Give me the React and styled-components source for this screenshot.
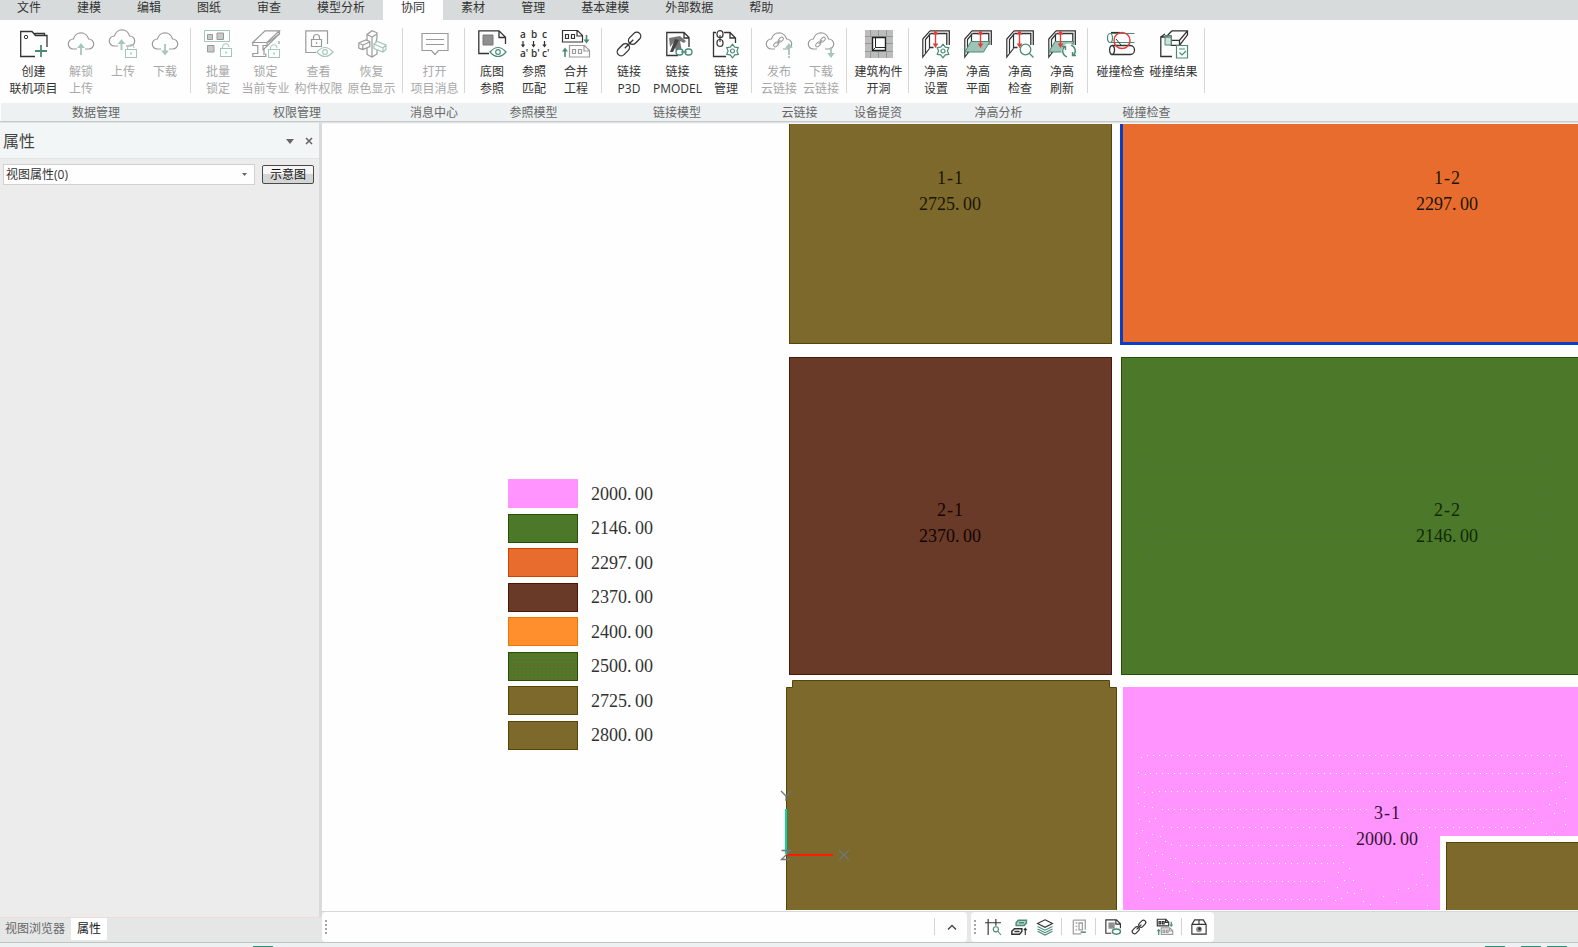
import React from "react";
import styled, { createGlobalStyle, css } from "styled-components";

const GlobalStyle = createGlobalStyle`
  *, *::before, *::after { box-sizing: border-box; }
  body {
    margin: 0;
    font-family: "Open Sans", "Noto Sans CJK SC", sans-serif;
    font-size: 12px;
    line-height: 16px;
    color: #333;
    background: #edf1f2;
  }
  button, select { font: inherit; color: inherit; }
`;

const color = {
  olive: ["#7d692c", "#584504"],
  brown: ["#693a28", "#4a1804"],
  green: ["#4c782a", "#225202"],
  orange: ["#e96c2f", "#cc4400"],
  amber: ["#ff8f2d", "#ee7700"],
  pink: ["#ff94ff", "#ff94ff"],
};

/* ---------- shell ---------- */

const Shell = styled.div`
  display: flex;
  flex-direction: column;
  min-height: 100vh;
`;

const MenuTabs = styled.nav`
  display: flex;
  height: 20px;
  background: #d8dbdc;
  overflow: hidden;
`;

const MenuTab = styled.button`
  border: 0;
  padding: 0 18px 5px;
  line-height: 15px;
  white-space: nowrap;
  background: ${(p) => (p.$active ? "#fefefe" : "transparent")};
  &:first-child { padding-left: 17px; }
`;

const Ribbon = styled.header`
  display: flex;
  background: #fefefe;
  border-bottom: 1px solid #c6cacb;
`;

const Group = styled.section`
  display: flex;
  flex-direction: column;
  flex: none;
  &:first-child { padding-left: 1px; }
`;

const GroupTools = styled.div`
  display: flex;
  height: 65px;
  margin: 8px 0 10px;
  padding: ${(p) => (p.$solo ? "0 3px 0 5px" : "0 4px 0 6px")};
  border-right: 1px solid #d6d6d6;
`;

const GroupLabel = styled.h2`
  margin: 0;
  height: 18px;
  font-size: 12px;
  line-height: 19px;
  font-weight: 400;
  text-align: center;
  color: #666;
  background: #edf1f2;
`;

const RibbonFiller = styled.div`
  flex: 1;
  align-self: flex-end;
  height: 18px;
  background: #edf1f2;
`;

const toolWidth = { normal: 42, wide: 53, latin: 55 };

const ToolButton = styled.button`
  --ink: #333;
  --accent: #4a8b78;
  --fill: #9b9b9b;
  display: flex;
  flex-direction: column;
  align-items: center;
  width: ${(p) => toolWidth[p.$size || "normal"]}px;
  border: 0;
  padding: 2px 0 0;
  background: none;
  line-height: 17px;
  white-space: nowrap;
  color: #333;
  svg { margin-bottom: 5px; flex: none; }
  &:disabled {
    --ink: #9a9a9a;
    --accent: #a5c6bc;
    --fill: #c8c8c8;
    color: #a8a8a8;
  }
`;

const Workspace = styled.div`
  display: flex;
  flex: 1;
  border-top: 1px solid #e0e3e3;
`;

/* ---------- property panel ---------- */

const Panel = styled.aside`
  display: flex;
  flex-direction: column;
  flex: none;
  width: 322px;
  background: #ececec;
`;

const PanelBody = styled.div`
  flex: 1;
  border-right: 3px solid #d9dadb;
`;

const PanelHeader = styled.div`
  display: flex;
  align-items: center;
  height: 36px;
  padding: 0 5px 0 3px;
  background: #f3f6f6;
  border-bottom: 1px solid #e8e2e3;
`;

const PanelTitle = styled.h1`
  flex: 1;
  margin: 0;
  font-size: 16px;
  line-height: 24px;
  font-weight: 400;
  color: #444;
`;

const PanelIcon = styled.button`
  display: flex;
  border: 0;
  padding: 0;
  margin-left: 9px;
  background: none;
`;

const PanelForm = styled.div`
  display: flex;
  align-items: center;
  gap: 7px;
  padding: 5px 5px 0 3px;
`;

const SelectBox = styled.div`
  display: flex;
  flex: 1;
  align-items: center;
  height: 21px;
  padding-right: 7px;
  border: 1px solid #d0d2d2;
  background: #fefefe;
`;

const Select = styled.select`
  flex: 1;
  appearance: none;
  border: 0;
  padding: 0 2px;
  background: transparent;
  outline: 0;
`;

const SketchButton = styled.button`
  width: 52px;
  height: 19px;
  padding: 0;
  border: 1px solid #4a4a4a;
  border-radius: 2px;
  line-height: 15px;
  color: #111;
  background: linear-gradient(#f6f6f6 45%, #d4d6d6 50%);
`;

const PanelTabs = styled.div`
  display: flex;
  height: 25px;
  padding-bottom: 2px;
  border-top: 1px solid #eedcdc;
  background: #e5e7e6;
`;

const PanelTab = styled.button`
  border: 0;
  padding: 0 6px;
  line-height: 20px;
  color: ${(p) => (p.$active ? "#222" : "#666")};
  background: ${(p) => (p.$active ? "#fefefe" : "transparent")};
  &:first-child { padding-left: 5px; }
`;

/* ---------- drawing canvas ---------- */

const Stage = styled.main`
  display: flex;
  flex-direction: column;
  flex: 1;
  min-width: 0;
`;

const Canvas = styled.div`
  position: relative;
  flex: 1;
  min-height: 400px;
  overflow: hidden;
  background: #fefefe;
  border-bottom: 1px solid #fefefe;
  &::after {
    content: "";
    position: absolute;
    inset: 0 0 auto;
    height: 1px;
    background: #f4f5f5;
  }
`;

const Room = styled.div`
  position: absolute;
  left: ${(p) => p.$x}px;
  top: ${(p) => p.$y}px;
  ${(p) => (p.$w ? `width: ${p.$w}px;` : "right: -4px;")}
  ${(p) => (p.$h ? `height: ${p.$h}px;` : "bottom: -1px;")}
  background: ${(p) => color[p.$tone][0]};
  border: 1px solid ${(p) => color[p.$tone][1]};
  ${(p) => p.$selected && css`border: 3px solid #0a3cc4;`}
  ${(p) => p.$cutout && css`box-shadow: 0 0 0 6px #fefefe;`}
`;

const PlanSvg = styled.svg`
  position: absolute;
  left: 0;
  top: 0;
  width: 100%;
  height: 100%;
`;

const plotText = css`
  font-family: "Liberation Serif", serif;
  font-size: 18px;
  line-height: 26px;
  white-space: nowrap;
`;

const RoomLabel = styled.div`
  ${plotText}
  position: absolute;
  left: ${(p) => p.$cx - 40}px;
  top: ${(p) => p.$y}px;
  width: 80px;
  text-align: center;
  color: ${(p) => p.$ink || "#1c1600"};
`;

const Mark = styled.span`
  display: inline-block;
  width: 8px;
  text-align: ${(p) => (p.$dot ? "left" : "center")};
`;

const Legend = styled.ul`
  position: absolute;
  left: 186px;
  top: 356px;
  display: flex;
  flex-direction: column;
  justify-content: space-between;
  height: 271px;
  margin: 0;
  padding: 0;
  list-style: none;
`;

const LegendItem = styled.li`
  ${plotText}
  display: flex;
  align-items: center;
  gap: 13px;
  height: 29px;
  line-height: 28px;
  color: #333;
`;

const Swatch = styled.span`
  width: 70px;
  height: 29px;
  border: 1px solid ${(p) => color[p.$tone][1]};
  background: ${(p) => color[p.$tone][0]};
  ${(p) =>
    p.$mixed &&
    css`
      background-image: repeating-linear-gradient(90deg, #4c782a 0 2px, transparent 2px 4px),
        repeating-linear-gradient(#4c782a 0 2px, #84622a 2px 3px);
    `}
`;

/* ---------- bottom bars ---------- */

const BottomBar = styled.div`
  display: flex;
  gap: 4px;
  height: 31px;
  border-top: 1px solid #d4d9d8;
  background: #e5e8e6;
`;

const Strip = styled.div`
  display: flex;
  align-items: center;
  border-radius: 4px;
  background: #fefefe;
  padding: 0 2px 1px 3px;
  ${(p) => p.$command && css`width: 645px;`}
`;

const Grip = styled.span`
  width: 2px;
  height: 14px;
  background: repeating-linear-gradient(#a6a6a6 0 2px, transparent 2px 4px);
`;

const CommandInput = styled.input`
  flex: 1;
  min-width: 0;
  border: 0;
  outline: 0;
  background: transparent;
`;

const Divider = styled.span`
  width: 1px;
  height: 17px;
  margin: 0 4px 0 3px;
  background: #d4d4d4;
`;

const SmallButton = styled.button`
  --ink: #333;
  --accent: #4a8b78;
  --fill: #9b9b9b;
  display: flex;
  justify-content: center;
  align-items: center;
  width: 26px;
  height: 26px;
  border: 0;
  padding: 0;
  background: none;
  ${Grip} + & { margin-left: 4px; }
  &:disabled { --ink: #a0a0a0; }
`;

const StatusBar = styled.footer`
  display: flex;
  align-items: flex-end;
  height: 5px;
  padding: 0 11px 0 253px;
  border-top: 1px solid #bfc4c4;
  background: #edf1f2;
`;

const StatusMark = styled.span`
  width: 20px;
  height: 1px;
  background: #2f8f78;
  margin-left: ${(p) => p.$gap || 0};
`;

/* ---------- icons ---------- */

const Ink = (p) => <path stroke="var(--ink)" fill="none" {...p} />;
const Acc = (p) => <path stroke="var(--accent)" fill="none" {...p} />;
const Red = (p) => <path stroke="#e03c3c" fill="none" {...p} />;

const Lock = ({ x, y }) => (
  <g transform={`translate(${x} ${y})`} fill="none" stroke="var(--accent)">
    <rect x=".5" y="5.5" width="11" height="8" fill="#fefefe" />
    <path d="M2.5 5.5V4a3.3 3.3 0 0 1 6.6 0" />
    <path d="M6 8.5v2" strokeWidth="1.6" />
  </g>
);

const Eye = ({ x = 14, y = 22 }) => (
  <g transform={`translate(${x} ${y})`} fill="none" stroke="var(--accent)" strokeWidth="1.2">
    <path d="M-8 0Q0-9 8 0Q0 9-8 0z" fill="#fefefe" />
    <circle r="2.3" />
  </g>
);

const gearPoints = Array.from({ length: 12 }, (_, i) => {
  const r = i % 2 ? 4.4 : 6.8;
  const a = (i * Math.PI) / 6 - Math.PI / 2;
  return `${(r * Math.cos(a)).toFixed(2)},${(r * Math.sin(a)).toFixed(2)}`;
}).join(" ");

const Gear = ({ x, y }) => (
  <g transform={`translate(${x} ${y})`} stroke="var(--accent)" strokeWidth="1.2">
    <polygon points={gearPoints} fill="#fefefe" strokeLinejoin="round" />
    <circle r="2" fill="none" />
  </g>
);

const Cloud = () => (
  <Ink strokeWidth="1.2" d="M10 19H6.2a5 5 0 0 1 .2-10A7.8 7.8 0 0 1 21.6 9a5 5 0 0 1 .2 10H18" />
);

const Chain = ({ scale = 1, x = 0, y = 0, stroke = "var(--ink)", width = 1.3 }) => (
  <g
    transform={`translate(${x} ${y}) scale(${scale}) rotate(-45)`}
    fill="none"
    stroke={stroke}
    strokeWidth={width / scale}
  >
    <rect x="-15" y="-4" width="14" height="8" rx="4" />
    <rect x="1" y="-4" width="14" height="8" rx="4" />
    <path d="M-6 0H6" />
  </g>
);

const Frame = () => (
  <>
    <Ink strokeWidth="1.2" d="M8 .8.8 9V27L7.500 18.500" />
    <Ink strokeWidth="1.2" d="M8.500 3.500 3.500 9.500V23M7.500 3.500V18.500" />
    <Ink strokeWidth="1.3" d="M8 .8H27.300V15M8.500 3.500H24.800V15M7.500 17.500h4" />
  </>
);

const Span = () => (
  <>
    <Red strokeWidth="1.4" d="M13.5 3.5v11" />
    <path fill="#e03c3c" d="m13.5 0 2.8 4.500h-5.600zM13.500 18l2.800-4.500h-5.600z" />
  </>
);

const Plane = () => (
  <path d="M7 11.5H26L19.5 22H.8z" fill="#9fc4b6" stroke="var(--accent)" />
);

const Doc = ({ x, y, tone, weight = 1.2 }) => (
  <g transform={`translate(${x} ${y})`} stroke={tone} fill="none" strokeWidth={weight}>
    <path d="M.5.5h15l5 5v6.5H.5zM15 1v5h5" />
    <path d="M3.5 4.5h3v4h-3zM9.5 4.5h3v4h-3z" />
  </g>
);

const icons = {
  create: (
    <>
      <Ink strokeWidth="1.3" d="M15 26.5H.7V1.5H12l3.500 4H27V17M14.500 3.500h10v2" />
      <circle cx="6" cy="7" r="1.7" fill="none" stroke="var(--ink)" />
      <Acc strokeWidth="1.8" d="M15 21h12M21 15v12" />
    </>
  ),
  cloudUp: (
    <>
      <Cloud />
      <Acc strokeWidth="1.8" d="M14 25V16" />
      <path fill="var(--accent)" d="m14 13 3.800 5h-7.600z" />
    </>
  ),
  cloudLock: (
    <>
      <g transform="translate(-1 -3)"><Cloud /></g>
      <Acc strokeWidth="1.8" d="M12.500 20V12" />
      <path fill="var(--accent)" d="m12.500 9 3.800 5H8.700z" />
      <Lock x={16} y={14} />
    </>
  ),
  cloudDown: (
    <>
      <Cloud />
      <Acc strokeWidth="1.8" d="M14 14v8" />
      <path fill="var(--accent)" d="m14 25.500 3.800-5h-7.600z" />
    </>
  ),
  batchLock: (
    <>
      <Acc d="M.5.5h25v11H.5z" />
      <g fill="var(--fill)" stroke="var(--ink)">
        <path d="M3.500 4.500h5v5h-5zM13 3h6.500v6.500H13zM3.500 15.500H10V22H3.500z" />
      </g>
      <Lock x={16} y={13} />
    </>
  ),
  beamLock: (
    <>
      <Ink strokeWidth="1.2" d="M.8 12.500 13 .8H27.500L15 12.500zM27.500.8v3L12 19v6M.8 12.500v3h5v8h-5v3h13v-3M15 12.500v3h-4v5" />
      <Ink strokeWidth="1.2" d="M27 11v3M16 12.500 27.500 4" />
      <Lock x={16} y={14} />
    </>
  ),
  viewLock: (
    <>
      <Ink strokeWidth="1.2" d="M11 22.500H.8V.8H22.500V14M6.500 9.500h10v7h-10zM8.500 9.500V7.500a3 3 0 0 1 6 0v2M11.500 12v2" />
      <Eye x={20} y={22} />
    </>
  ),
  restore: (
    <>
      <Ink strokeWidth="1.2" d="M9 4.500 14 .8l5 2v5l-1 4M9 4.500l5 2.500V27l-5-2.500zM14 7l5-3M14 27l5-3v-4" />
      <Ink strokeWidth="1.2" fill="#fefefe" d="m.8 13 7-3 4 1.500v5l-7 3-4-1.500zM.8 13l4 2v4M4.800 15l7-3" />
      <Acc strokeWidth="1.2" fill="#fefefe" d="m16 14 3-2.500 9 3.500v4.500L25 22l-9-3.500zM16 14l9 4 3-3M25 18v4" />
    </>
  ),
  message: (
    <>
      <Ink strokeWidth="1.2" d="M1 3.500h26v17h-9.500L14 24.500l-3.500-4H1z" />
      <Ink strokeWidth="1.2" d="M5 9.500h18M5 14.500h18" />
    </>
  ),
  baseMap: (
    <>
      <Ink strokeWidth="1.3" d="M11 23.500H.8V.8H21l6.500 6.500V14M21 1v6.500h6.500" />
      <path d="M5 5h10v10H5z" fill="#8f8f8f" stroke="#777" />
      <Eye x={20} y={22} />
    </>
  ),
  match: (
    <>
      <g fill="var(--ink)" fontFamily="Open Sans" fontSize="10" fontWeight="600">
        <text x="0" y="8">a</text><text x="11" y="8">b</text><text x="22" y="8">c</text>
        <text x="0" y="27">a'</text><text x="11" y="27">b'</text><text x="22" y="27">c'</text>
      </g>
      <Ink strokeWidth="1.2" d="M3 11v5M13.500 11v5M24.500 11v5" />
      <path fill="var(--ink)" d="M.8 14.500h4.400L3 17.500zM11.300 14.500h4.400l-2.200 3zM22.300 14.500h4.400l-2.200 3z" />
    </>
  ),
  merge: (
    <>
      <Doc x={0} y={0} tone="var(--ink)" />
      <Doc x={7} y={15} tone="var(--fill)" />
      <Acc strokeWidth="1.6" d="M24.500 5v5M3 27v-6" />
      <path fill="var(--accent)" d="M21.500 9.500h6l-3 4zM0 21.500h6l-3-4z" />
    </>
  ),
  mergeSmall: (
    <>
      <Doc x={0} y={0} tone="var(--ink)" weight={2} />
      <Doc x={7} y={15} tone="var(--fill)" weight={2} />
      <Acc strokeWidth="2.2" d="M25 5v5M3 28v-7" />
      <path fill="var(--accent)" d="M21.500 9.500h7l-3.500 4.500zM-.5 21.500h7L3 17z" />
    </>
  ),
  link: <Chain x={14} y={14} />,
  linkModel: (
    <>
      <Ink strokeWidth="1.3" d="M14 25.500H2.800V2.500H20l5 5V17M20 2.500v5.500h5" />
      <path d="M5 8 16 6l6 5-2 2-4-2 2 11H12L10 12l-4 5z" fill="#777" />
      <path d="m11 9 4 1-6 12H6z" fill="#444" />
      <rect x="12" y="19" width="7" height="6" rx="3" fill="#fefefe" stroke="var(--accent)" strokeWidth="1.3" />
      <rect x="21" y="19" width="7" height="6" rx="3" fill="#fefefe" stroke="var(--accent)" strokeWidth="1.3" />
      <Acc strokeWidth="1.3" d="M17 22h6" />
    </>
  ),
  linkManage: (
    <>
      <Ink strokeWidth="1.3" d="M4 2.500H1.500v24H14M12 2.500h6l5.500 5.500V13M18 2.500V8h5.500" />
      <rect x="5" y=".7" width="6" height="7" rx="3" fill="#fefefe" stroke="var(--ink)" strokeWidth="1.2" />
      <rect x="5" y="9.5" width="6" height="7" rx="3" fill="#fefefe" stroke="var(--ink)" strokeWidth="1.2" />
      <Ink d="M8 5v7" />
      <Gear x={20.5} y={21} />
    </>
  ),
  cloudPublish: (
    <>
      <Cloud />
      <Chain x={13.5} y={12} scale={0.42} width={1} />
      <Acc strokeWidth="1.8" d="M24 28V17" strokeDasharray="2 1 8 1" />
      <path fill="var(--accent)" d="m24 13 3.800 5h-7.600z" />
    </>
  ),
  cloudFetch: (
    <>
      <Cloud />
      <Chain x={13.5} y={12} scale={0.42} width={1} />
      <Acc strokeWidth="1.8" d="M24 17v8" />
      <path fill="var(--accent)" d="m24 28 3.800-5h-7.600z" />
    </>
  ),
  opening: (
    <>
      <path d="M0 0h28v28H0z" fill="#bdbbbb" />
      <path stroke="#8aa096" d="M0 6.500h28M0 21.500h28M0 13.500h7M21 13.500h7M5.500 0v6M13.500 0v6M21.500 0v6M5.500 22v6M13.500 22v6M21.500 22v6" />
      <path d="M7.500 7.500h13v13h-13z" fill="#fefefe" stroke="#222" strokeWidth="1.4" />
      <path d="M10.500 8v9.500h10M10.500 17.500l-3 3" fill="none" stroke="#222" />
    </>
  ),
  heightSet: (<><Frame /><Span /><Gear x={21} y={21} /></>),
  heightPlane: (<><Frame /><Plane /><g transform="translate(3 0)"><Span /></g></>),
  heightCheck: (
    <>
      <Frame />
      <Span />
      <circle cx="19.5" cy="19.5" r="5.3" fill="#fefefe" stroke="var(--accent)" strokeWidth="1.3" />
      <Acc strokeWidth="1.3" d="m23.500 23.500 4 4" />
    </>
  ),
  heightRefresh: (
    <>
      <Frame />
      <Plane />
      <g transform="translate(-1 0)"><Span /></g>
      <circle cx="21" cy="21" r="7.5" fill="#fefefe" />
      <Acc strokeWidth="1.4" d="M19 26.800a6 6 0 0 1-2.500-10M23 15.200a6 6 0 0 1 2.500 10M14 16.500h3.500V20M28 25.500h-3.500V22" />
    </>
  ),
  clashCheck: (
    <>
      <Acc strokeWidth="1.2" d="M3.500 3.500H27.500M3.500 12.500H27.500" />
      <ellipse cx="3" cy="8" rx="2.5" ry="4.5" fill="none" stroke="var(--accent)" strokeWidth="1.2" />
      <Ink strokeWidth="1.2" d="M4 2.500h9" />
      <Ink strokeWidth="1.3" d="M5 15.500H23.500a4 4.500 0 0 1 0 9H5M5 15.500a2.500 4.500 0 1 0 .1 0" />
      <circle cx="15" cy="10.5" r="8" fill="none" stroke="#e03c3c" strokeWidth="1.4" />
      <Ink d="m9 9 5 6" />
    </>
  ),
  clashResult: (
    <>
      <Ink strokeWidth="1.3" d="M12 26.500H.8V7h10.500v9M.8 7 5 4M12 .8h15.500v4l-8 10.500h-8M12 .8 6 7M27.500.8l-8 9.500v5M11.300 10.300h8.200" />
      <Acc d="M5 5.500h6.500v9.500H5z" fill="#9fc4b6" fillOpacity=".5" />
      <Acc strokeWidth="1.2" fill="#fefefe" d="M16.500 15.500h11v12.500h-11zM19 19h6M19.500 22.500l2.500 2.500 4-4" />
    </>
  ),
  gridSearch: (
    <>
      <Ink strokeWidth="2" d="M0 6.500h28M5.500 0v28M19 0v12" />
      <circle cx="19" cy="18" r="4.5" fill="#fefefe" stroke="var(--accent)" strokeWidth="2" />
      <Acc strokeWidth="2" d="m22 21 6 7" />
    </>
  ),
  stackUp: (
    <>
      <Acc strokeWidth="2.6" fill="#b9d3ca" d="M9 6.500 13 2h14v5l-4 4.500H9zM14 6.500h9" />
      <Ink strokeWidth="2.6" d="M1.500 21.500 6 17h13v5l-4 4.500H1.500zM6 22h9" />
      <Ink strokeWidth="2" d="M25 28V17M22.500 19.500l2.500-3 2.500 3" />
    </>
  ),
  layers: (
    <>
      <Acc strokeWidth="2" d="m1 13 13 6.500L27 13M1 17.500 14 24l13-6.500M1 21.500 14 28l13-6.500" />
      <Ink strokeWidth="2" fill="#fefefe" d="m14 1.500 13 6.500-13 6.500L1 8z" />
    </>
  ),
  report: (
    <>
      <Ink strokeWidth="2.2" d="M4 2h21v17M4 2v24h14M8 7h3M8 13h3M8 19h3M14 7h6v12h-6z" />
      <Acc strokeWidth="2.6" d="M17 23h9" />
    </>
  ),
  package: (
    <>
      <Ink strokeWidth="2" d="M1.500 9.500 6.500 1.500h15l5 8V26.500h-25zM1.500 9.500h25M14 1.500v8" />
      <circle cx="14" cy="18" r="5" fill="#8a8f88" />
      <circle cx="15" cy="17" r="2.5" fill="#333" />
    </>
  ),
  baseMapSmall: (
    <>
      <Ink strokeWidth="2" d="M11 25H1.500V1.500H20l7 7V16M19 2v7h8" />
      <path d="M6 6h11v11H6z" fill="#8f8f8f" />
      <ellipse cx="20" cy="22" rx="7" ry="4.5" fill="#fefefe" stroke="var(--accent)" strokeWidth="2.6" />
    </>
  ),
  linkSmall: <Chain x={14} y={14} width={2} />,
};

const Icon = ({ name, size = 28 }) => (
  <svg width={size} height={size} viewBox="0 0 28 28" aria-hidden="true" overflow="visible">
    {icons[name]}
  </svg>
);

/* ---------- data ---------- */

const menu = ["文件", "建模", "编辑", "图纸", "审查", "模型分析", "协同", "素材", "管理", "基本建模", "外部数据", "帮助"];

const groups = [
  ["数据管理", [
    ["create", ["创建", "联机项目"], { size: "wide" }],
    ["cloudUp", ["解锁", "上传"], { off: true }],
    ["cloudLock", ["上传"], { off: true }],
    ["cloudDown", ["下载"], { off: true }],
  ]],
  ["权限管理", [
    ["batchLock", ["批量", "锁定"], { off: true }],
    ["beamLock", ["锁定", "当前专业"], { off: true, size: "wide" }],
    ["viewLock", ["查看", "构件权限"], { off: true, size: "wide" }],
    ["restore", ["恢复", "原色显示"], { off: true, size: "wide" }],
  ]],
  ["消息中心", [["message", ["打开", "项目消息"], { off: true, size: "wide" }]]],
  ["参照模型", [
    ["baseMap", ["底图", "参照"], {}],
    ["match", ["参照", "匹配"], {}],
    ["merge", ["合并", "工程"], {}],
  ]],
  ["链接模型", [
    ["link", ["链接", "P3D"], {}],
    ["linkModel", ["链接", "PMODEL"], { size: "latin" }],
    ["linkManage", ["链接", "管理"], {}],
  ]],
  ["云链接", [
    ["cloudPublish", ["发布", "云链接"], { off: true }],
    ["cloudFetch", ["下载", "云链接"], { off: true }],
  ]],
  ["设备提资", [["opening", ["建筑构件", "开洞"], { size: "wide" }]]],
  ["净高分析", [
    ["heightSet", ["净高", "设置"], {}],
    ["heightPlane", ["净高", "平面"], {}],
    ["heightCheck", ["净高", "检查"], {}],
    ["heightRefresh", ["净高", "刷新"], {}],
  ]],
  ["碰撞检查", [
    ["clashCheck", ["碰撞检查"], { size: "wide" }],
    ["clashResult", ["碰撞结果"], { size: "wide" }],
  ]],
];

const legend = [
  ["2000.00", "pink"],
  ["2146.00", "green"],
  ["2297.00", "orange"],
  ["2370.00", "brown"],
  ["2400.00", "amber"],
  ["2500.00", "green", true],
  ["2725.00", "olive"],
  ["2800.00", "olive"],
];

const labels = [
  [628, 42, "1-1", "2725.00"],
  [1125, 42, "1-2", "2297.00"],
  [628, 374, "2-1", "2370.00", "#120400"],
  [1125, 374, "2-2", "2146.00", "#0f2a02"],
  [1065, 677, "3-1", "2000.00", "#3a1238"],
];

const pinkRows = [
  [825, 1241, 632], [828, 1232, 650], [837, 1222, 668], [840, 1045, 686],
  [1086, 1216, 686], [849, 1030, 704], [1095, 1205, 704], [858, 1022, 722],
  [867, 1012, 740], [870, 1004, 758], [879, 1002, 776],
];

const pinkDots = [
  [819, 634], [816, 649], [823, 651], [816, 664], [822, 669], [830, 669], [816, 680], [822, 683],
  [830, 684], [817, 696], [827, 698], [833, 695], [840, 703], [814, 710], [820, 707], [824, 719],
  [830, 711], [838, 713], [843, 718], [849, 721], [817, 725], [826, 732], [833, 728], [840, 731],
  [848, 735], [853, 735], [860, 739], [815, 739], [823, 744], [834, 742], [841, 747], [829, 751],
  [847, 751], [853, 751], [817, 754], [860, 755], [823, 760], [842, 760], [830, 764], [843, 765],
  [850, 767], [857, 768], [863, 767], [815, 768], [821, 775], [837, 775], [870, 775], [1244, 643],
  [1237, 649], [1243, 659], [1229, 667], [1237, 664], [1243, 675], [1234, 680], [1227, 681],
  [1242, 688], [1232, 690], [1243, 701], [1211, 700], [1219, 699], [1224, 710], [1232, 709],
  [1021, 739], [1016, 749], [1027, 745], [1022, 757], [1031, 757], [1015, 764], [1025, 769],
  [1032, 770], [1039, 766], [1006, 773], [1013, 777], [1019, 775], [1041, 778], [1048, 781],
  [1105, 723], [1104, 739], [1100, 751], [1094, 761], [1086, 765], [1076, 766], [1061, 773],
  [1074, 779], [1105, 762], [1105, 782],
];

const greenRows = [337, 343, 366, 379, 392, 405, 418, 431, 444];

const PlotText = ({ text }) =>
  text.split(/([.-])/).map((part, i) =>
    i % 2 ? <Mark key={i} $dot={part === "."}>{part}</Mark> : part
  );

const SmallTool = ({ icon, label, disabled }) => (
  <SmallButton aria-label={label} title={label} disabled={disabled}>
    <Icon name={icon} size={16} />
  </SmallButton>
);

/* ---------- page ---------- */

export default function App() {
  return (
    <Shell>
      <GlobalStyle />
      <MenuTabs>
        {menu.map((name) => (
          <MenuTab key={name} $active={name === "协同"}>{name}</MenuTab>
        ))}
      </MenuTabs>

      <Ribbon>
        {groups.map(([title, tools]) => (
          <Group key={title}>
            <GroupTools $solo={tools.length === 1}>
              {tools.map(([icon, lines, opt]) => (
                <ToolButton key={icon} $size={opt.size} disabled={opt.off}>
                  <Icon name={icon} />
                  {lines.map((line) => <span key={line}>{line}</span>)}
                </ToolButton>
              ))}
            </GroupTools>
            <GroupLabel>{title}</GroupLabel>
          </Group>
        ))}
        <RibbonFiller />
      </Ribbon>

      <Workspace>
        <Panel>
          <PanelBody>
            <PanelHeader>
              <PanelTitle>属性</PanelTitle>
              <PanelIcon aria-label="选项">
                <svg width="10" height="10" viewBox="0 0 10 10"><path d="M1 3h8L5 8z" fill="#666" /></svg>
              </PanelIcon>
              <PanelIcon aria-label="关闭">
                <svg width="10" height="10" viewBox="0 0 10 10"><path d="m2 2 6 6M8 2 2 8" stroke="#666" strokeWidth="1.6" /></svg>
              </PanelIcon>
            </PanelHeader>
            <PanelForm>
              <SelectBox>
                <Select aria-label="视图属性">
                  <option>视图属性(0)</option>
                </Select>
                <svg width="5" height="3" viewBox="0 0 5 3"><path d="M0 0h5L2.500 3z" fill="#666" /></svg>
              </SelectBox>
              <SketchButton>示意图</SketchButton>
            </PanelForm>
          </PanelBody>
          <PanelTabs>
            <PanelTab>视图浏览器</PanelTab>
            <PanelTab $active>属性</PanelTab>
          </PanelTabs>
        </Panel>

        <Stage>
          <Canvas>
            <Room $tone="olive" $x={467} $y={-2} $w={323} $h={223} />
            <Room $tone="orange" $x={798} $y={-4} $h={226} $selected />
            <Room $tone="brown" $x={467} $y={234} $w={323} $h={318} />
            <Room $tone="green" $x={799} $y={234} $h={318} />
            <Room $tone="pink" $x={801} $y={564} />
            <Room $tone="olive" $x={1124} $y={719} $cutout />
            <PlanSvg aria-hidden="true">
              <path
                d="M464.5 900V564.5H470.5V557.5H787.5V564.5H794.5V900"
                fill={color.olive[0]}
                stroke={color.olive[1]}
              />
              {pinkRows.map(([x1, x2, y]) => (
                <path key={`${x1}-${y}`} d={`M${x1} ${y}.5H${x2}`} stroke="#fff" strokeDasharray="1 5" />
              ))}
              {pinkDots.map(([x, y]) => (
                <rect key={`${x}-${y}`} x={x} y={y} width="1" height="1" fill="#fff" />
              ))}
              {greenRows.map((y) => (
                <path key={y} d={`M${820 + (y % 7)} ${y}.5H${1228 - (y % 9)}`} stroke="#4a7350" strokeDasharray="1 4" />
              ))}
              <path d="M464 686v45" stroke="#00d9a8" strokeWidth="2" />
              <path d="M465 732h46" stroke="#ff1a00" strokeWidth="2" />
              <g fill="none" stroke="#6e7678" strokeWidth="1.3">
                <path d="m459 668 5 5 5-5M464 673v5" />
                <path d="M459.5 727.5h9l-9 9h9" />
                <path d="m517 727 10 10M527 727l-10 10" />
              </g>
            </PlanSvg>
            {labels.map(([cx, y, name, value, ink]) => (
              <RoomLabel key={name} $cx={cx} $y={y} $ink={ink}>
                <div><PlotText text={name} /></div>
                <div><PlotText text={value} /></div>
              </RoomLabel>
            ))}
            <Legend>
              {legend.map(([value, tone, mixed]) => (
                <LegendItem key={value}>
                  <Swatch $tone={tone} $mixed={mixed} />
                  <span><PlotText text={value} /></span>
                </LegendItem>
              ))}
            </Legend>
          </Canvas>
          <BottomBar>
            <Strip $command>
              <Grip />
              <CommandInput aria-label="命令" />
              <Divider />
              <SmallButton aria-label="展开">
                <svg width="10" height="6" viewBox="0 0 10 6"><path d="m1 5.500 4-4 4 4" fill="none" stroke="#444" strokeWidth="1.4" /></svg>
              </SmallButton>
            </Strip>
            <Strip>
              <Grip />
              <SmallTool icon="gridSearch" label="轴网" />
              <SmallTool icon="stackUp" label="楼层" />
              <SmallTool icon="layers" label="图层" />
              <Divider />
              <SmallTool icon="report" label="报告" disabled />
              <Divider />
              <SmallTool icon="baseMapSmall" label="底图参照" />
              <SmallTool icon="linkSmall" label="链接" />
              <SmallTool icon="mergeSmall" label="合并工程" />
              <Divider />
              <SmallTool icon="package" label="构件包" />
            </Strip>
          </BottomBar>
        </Stage>
      </Workspace>

      <StatusBar>
        <StatusMark />
        <StatusMark $gap="auto" />
        <StatusMark $gap="16px" />
        <StatusMark $gap="6px" />
      </StatusBar>
    </Shell>
  );
}
